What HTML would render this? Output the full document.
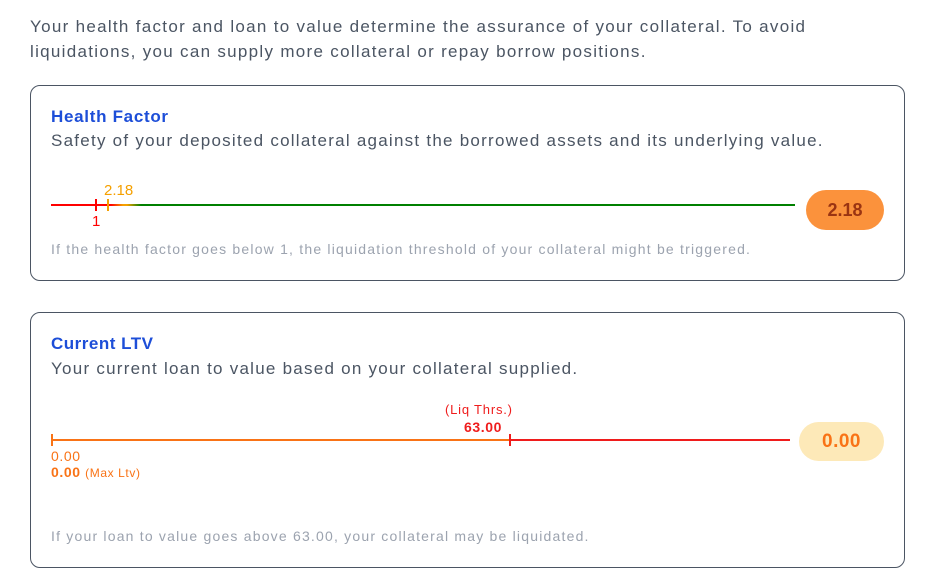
<!DOCTYPE html>
<html><head><meta charset="utf-8"><style>
body{margin:0;width:929px;height:587px;background:#fff;font-family:"Liberation Sans",sans-serif;position:relative;overflow:hidden}
.a{position:absolute;white-space:nowrap}
.card{position:absolute;left:30px;width:875px;border:1.5px solid #4b5563;border-radius:10px;box-sizing:border-box}
.t{color:#1d4ed8;font-weight:bold;font-size:17px;letter-spacing:0.7px}
.s{color:#4b5563;font-size:17px;letter-spacing:1.25px}
.n{color:#9ca3af;font-size:14px;letter-spacing:1.2px}
</style></head><body>
<div class="a s" style="left:30px;top:14px;line-height:25px;letter-spacing:1.3px">Your health factor and loan to value determine the assurance of your collateral. To avoid<br>liquidations, you can supply more collateral or repay borrow positions.</div>

<div class="card" style="top:85px;height:196px"></div>
<div class="a t" style="left:51px;top:107px">Health Factor</div>
<div class="a s" style="left:51px;top:131px">Safety of your deposited collateral against the borrowed assets and its underlying value.</div>
<div class="a" style="left:51px;top:204px;width:744px;height:2px;background:linear-gradient(90deg,#f00 0,#f00 60px,#f5a000 72px,#f5a000 76px,#008000 90px,#008000 100%)"></div>
<div class="a" style="left:95px;top:199px;width:2px;height:12px;background:#f00"></div>
<div class="a" style="left:107px;top:199px;width:2px;height:12px;background:#f5a000"></div>
<div class="a" style="left:104px;top:182px;font-size:15px;color:#f5a000">2.18</div>
<div class="a" style="left:92px;top:213px;font-size:15px;color:#f00">1</div>
<div class="a" style="left:806px;top:190px;width:78px;height:40px;border-radius:20px;background:#fb923c;color:#9a3412;font-weight:bold;font-size:18px;line-height:40px;text-align:center">2.18</div>
<div class="a n" style="left:51px;top:241px">If the health factor goes below 1, the liquidation threshold of your collateral might be triggered.</div>

<div class="card" style="top:312px;height:256px"></div>
<div class="a t" style="left:51px;top:334px;letter-spacing:0.5px">Current LTV</div>
<div class="a s" style="left:51px;top:359px">Your current loan to value based on your collateral supplied.</div>
<div class="a" style="left:445px;top:402px;font-size:13px;color:#ef1c1c;letter-spacing:0.8px">(Liq Thrs.)</div>
<div class="a" style="left:464px;top:419px;font-size:14px;font-weight:bold;color:#ef1c1c;letter-spacing:0.6px">63.00</div>
<div class="a" style="left:51px;top:439px;width:459px;height:2px;background:#f97316"></div>
<div class="a" style="left:510px;top:439px;width:280px;height:2px;background:#ef1c1c"></div>
<div class="a" style="left:51px;top:434px;width:2px;height:12px;background:#f97316"></div>
<div class="a" style="left:509px;top:434px;width:2px;height:12px;background:#ef1c1c"></div>
<div class="a" style="left:51px;top:448px;font-size:14px;color:#f97316;letter-spacing:0.6px">0.00</div>
<div class="a" style="left:51px;top:464px;font-size:14px;color:#f97316;letter-spacing:0.6px"><b>0.00</b> <span style="font-size:12px">(Max Ltv)</span></div>
<div class="a" style="left:799px;top:422px;width:85px;height:39px;border-radius:20px;background:#fde9b8;color:#f97316;font-weight:bold;font-size:19px;line-height:39px;text-align:center;letter-spacing:0.5px">0.00</div>
<div class="a n" style="left:51px;top:528px">If your loan to value goes above 63.00, your collateral may be liquidated.</div>
</body></html>
